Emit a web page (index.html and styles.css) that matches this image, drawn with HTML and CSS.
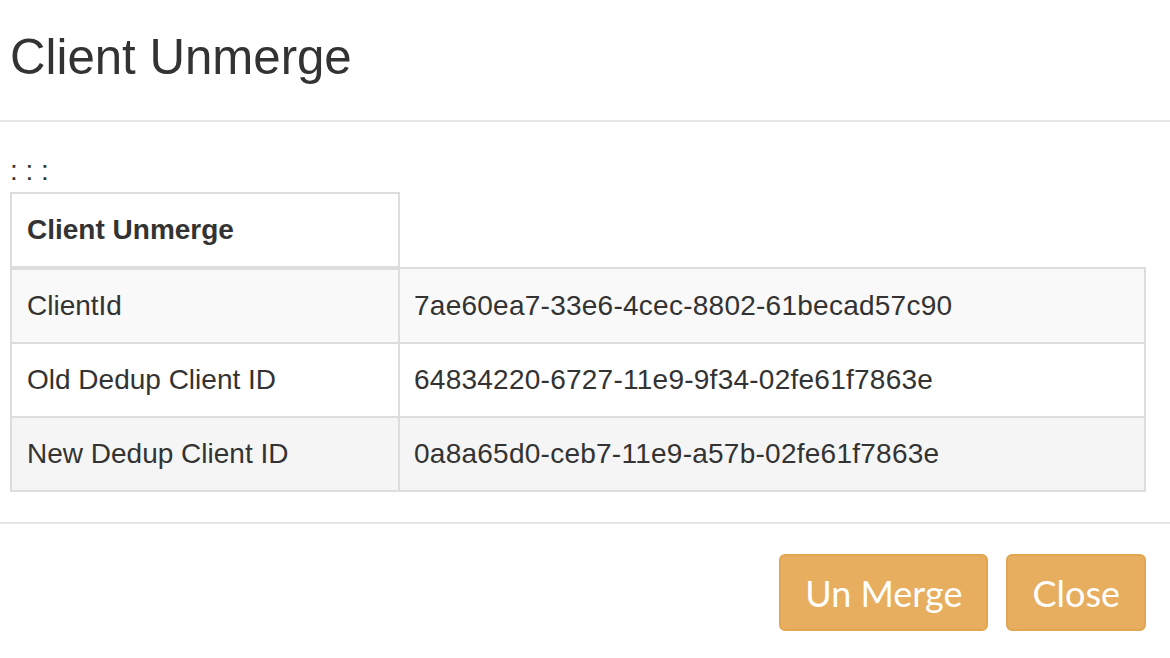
FILE: index.html
```html
<!DOCTYPE html>
<html>
<head>
<meta charset="utf-8">
<link rel="stylesheet" href="styles.css">
</head>
<body>
<div class="modal">
  <div class="modal-header">
    <h3 class="modal-title">Client Unmerge</h3>
  </div>
  <div class="modal-body">
    <div class="dots">: : :</div>
    <table class="info">
      <colgroup><col class="col-label"><col></colgroup>
      <thead>
        <tr><th>Client Unmerge</th></tr>
      </thead>
      <tbody>
        <tr class="odd"><td>ClientId</td><td>7ae60ea7-33e6-4cec-8802-61becad57c90</td></tr>
        <tr class="even"><td>Old Dedup Client ID</td><td>64834220-6727-11e9-9f34-02fe61f7863e</td></tr>
        <tr class="last"><td>New Dedup Client ID</td><td>0a8a65d0-ceb7-11e9-a57b-02fe61f7863e</td></tr>
      </tbody>
    </table>
  </div>
  <div class="modal-footer">
    <button class="btn">Un Merge</button>
    <button class="btn">Close</button>
  </div>
</div>
</body>
</html>
```
FILE: styles.css
```css
html, body {
  margin: 0;
  padding: 0;
  background: #fff;
}
body {
  font-family: "Liberation Sans", Arial, sans-serif;
  color: #333;
  width: 1170px;
  height: 658px;
  overflow: hidden;
}
.modal-header {
  padding: 30px 24px 36px 10px;
  border-bottom: 2px solid #e5e5e5;
}
.modal-title {
  margin: 0;
  font-size: 49.2px;
  font-weight: normal;
  line-height: 54px;
}
.modal-body {
  padding: 29px 24px 30px 10px;
}
.dots {
  font-size: 28px;
  line-height: 40px;
  height: 41px;
}
.info {
  width: 1136px;
  border-collapse: collapse;
  table-layout: fixed;
  font-size: 28px;
  line-height: 40px;
}
.col-label {
  width: 388px;
}
.info th {
  text-align: left;
  font-weight: bold;
  padding: 16px 15px;
  border: 2px solid #ddd;
  border-bottom: 4px solid #ddd;
}
.info td {
  padding: 16px 15px;
  border: 2px solid #ddd;
  white-space: nowrap;
}
.info td + td {
  padding-left: 14px;
  letter-spacing: 0.25px;
}
.info tr.odd td { background: #f9f9f9; }
.info tr.even td { background: #fff; }
.info tr.last td { background: #f5f5f5; }
.modal-footer {
  border-top: 2px solid #e5e5e5;
  padding: 30px 24px 0 10px;
  display: flex;
  justify-content: flex-end;
  gap: 18px;
}
.btn {
  font-family: Lato, "Liberation Sans", sans-serif;
  font-size: 36px;
  color: #fff;
  background: #e6ae5e;
  border: 2px solid #e2a552;
  border-radius: 6px;
  height: 77px;
  padding: 0 24px;
  line-height: 1;
  cursor: pointer;
}
```
